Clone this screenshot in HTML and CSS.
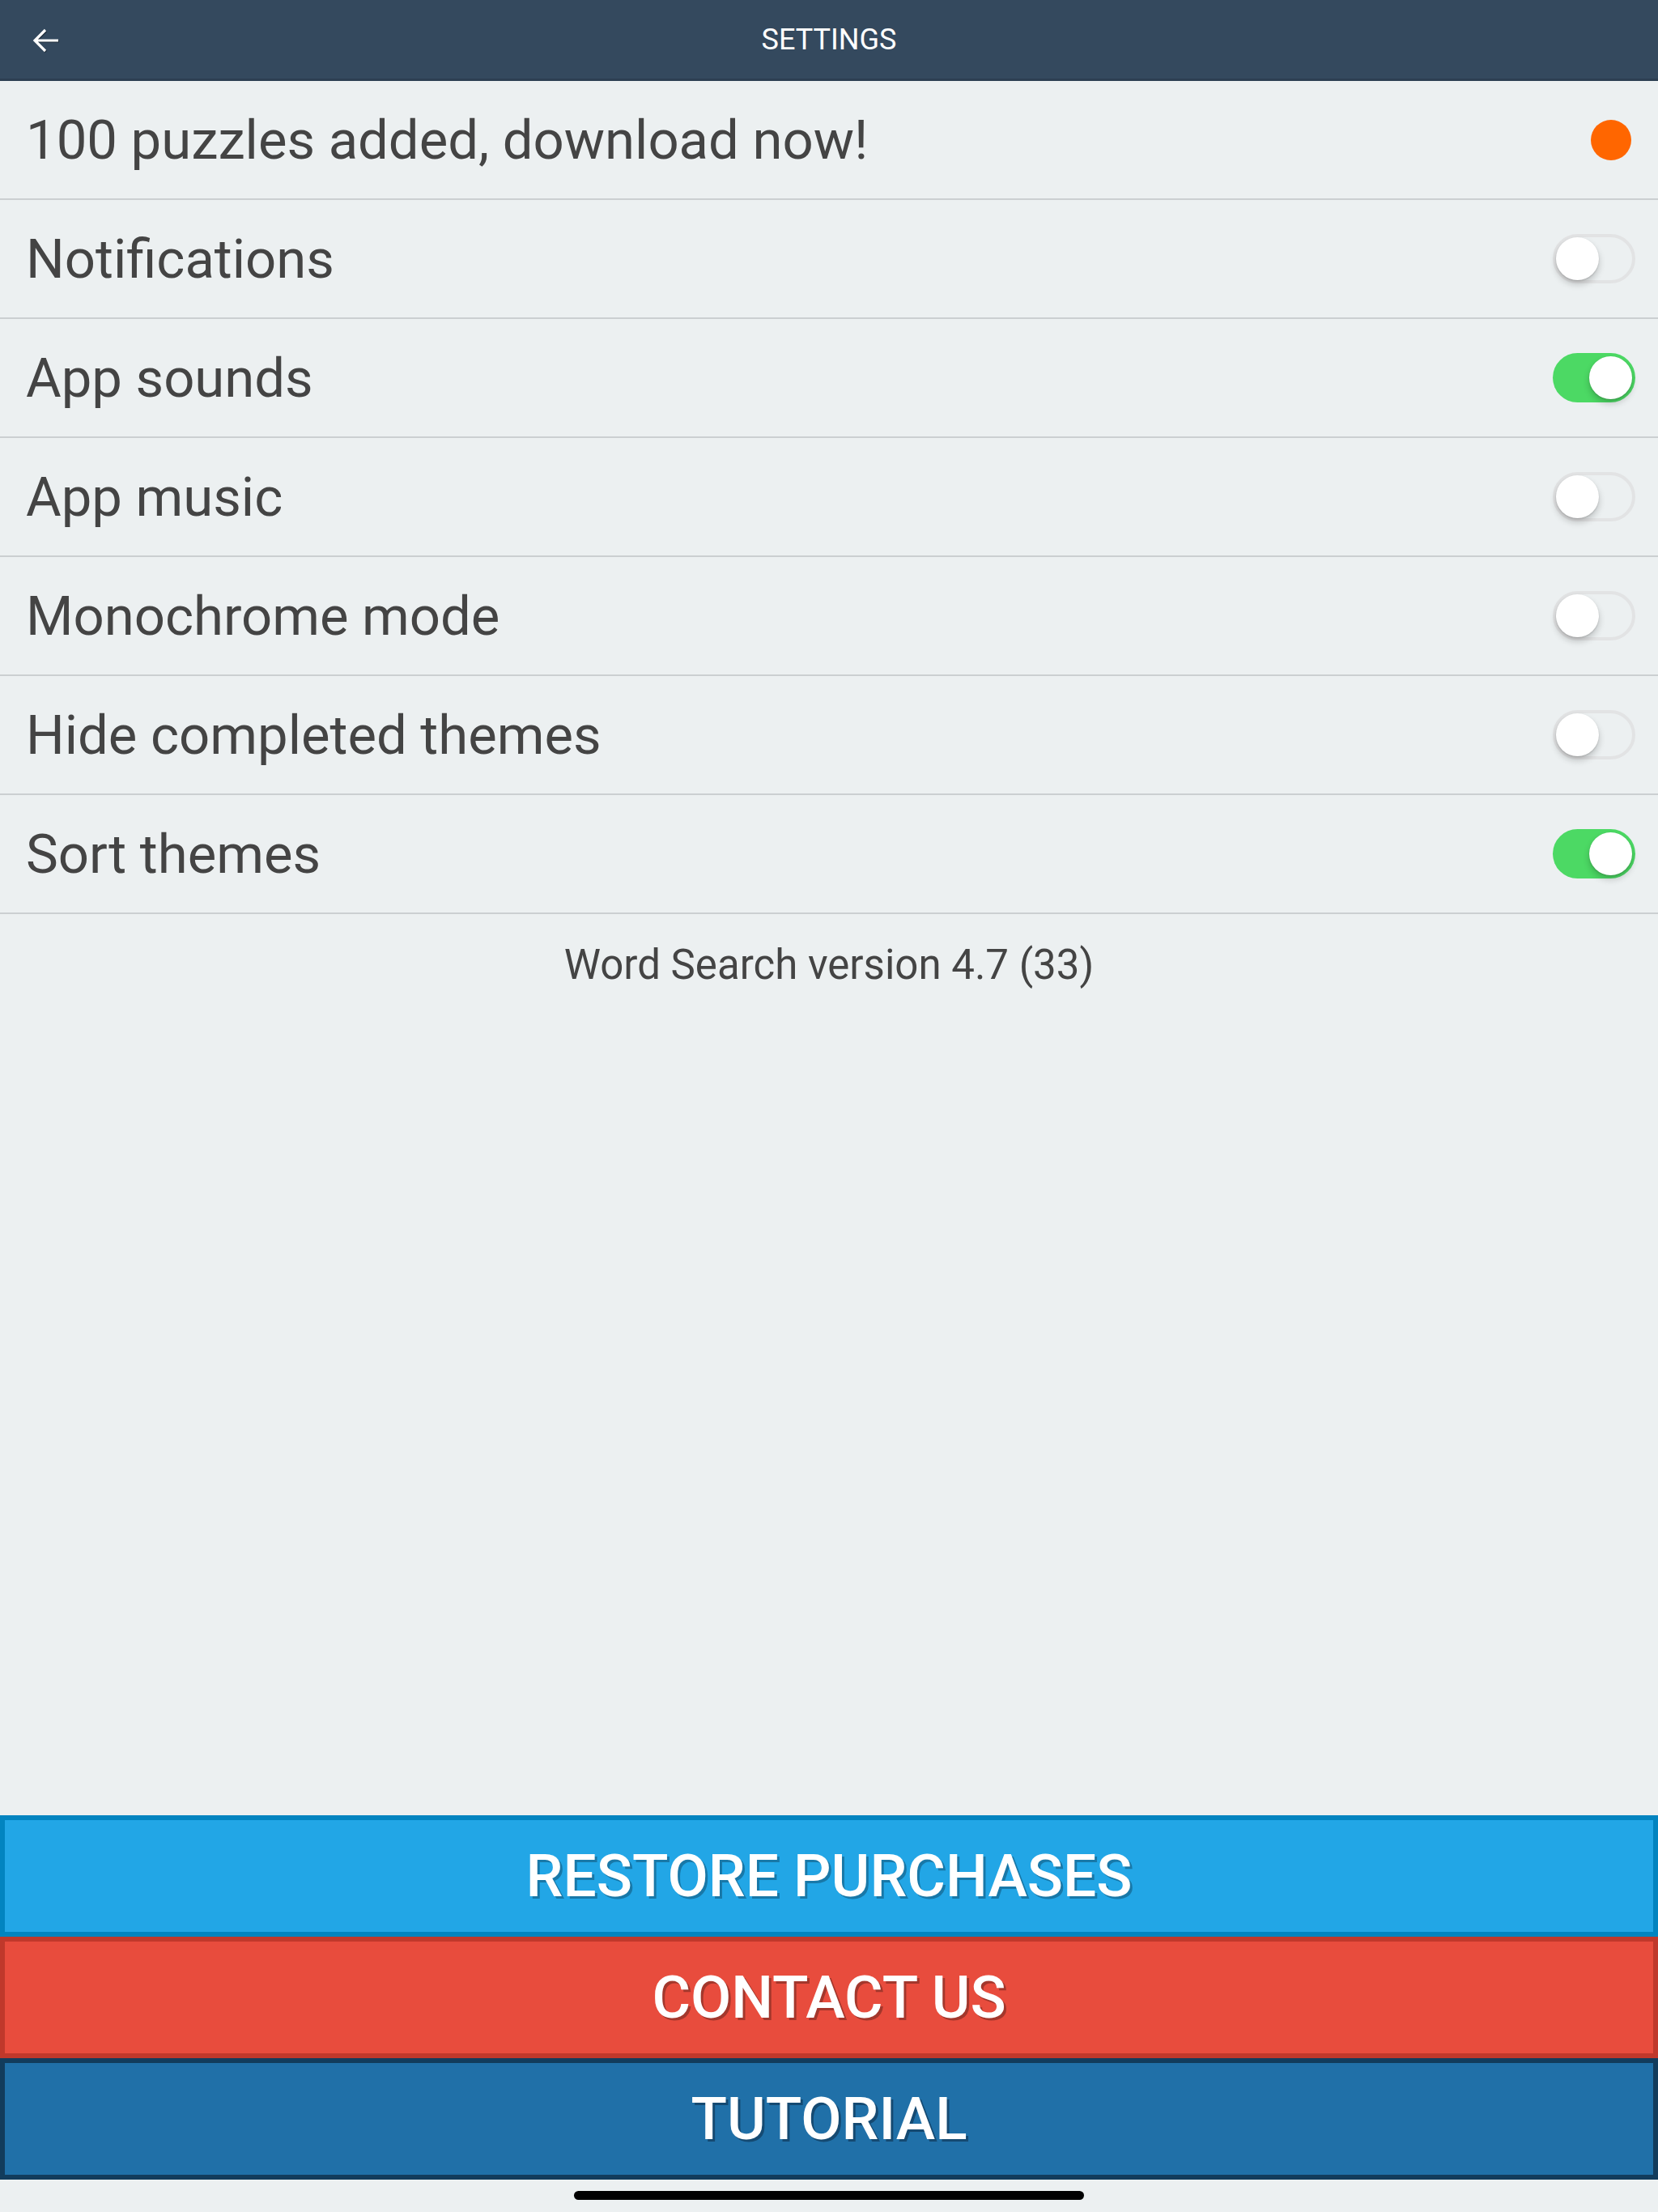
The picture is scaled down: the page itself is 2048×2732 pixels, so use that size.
FILE: index.html
```html
<!DOCTYPE html>
<html lang="en">

    <head>
        <meta charset="UTF-8">
        <meta name="viewport" content="width=device-width, initial-scale=1.0">
        <title>Settings</title>
        <link rel="stylesheet" href="styles.css">
    </head>

    <body>
        <div class="screen">
            <header class="topbar">
                <a class="back" href="#">
                    <svg width="34" height="32" viewBox="0 0 34 32">
                        <path d="M32 16H4M16 3L3 16l13 13" fill="none" stroke="#fff" stroke-width="3.2" />
                    </svg>
                </a>
                <span class="title">SETTINGS</span>
            </header>

            <ul class="settings">
                <li class="row">
                    <span>100 puzzles added, download now!</span>
                    <span class="dot"></span>
                </li>
                <li class="row">
                    <span>Notifications</span>
                    <span class="toggle"></span>
                </li>
                <li class="row">
                    <span>App sounds</span>
                    <span class="toggle on"></span>
                </li>
                <li class="row">
                    <span>App music</span>
                    <span class="toggle"></span>
                </li>
                <li class="row">
                    <span>Monochrome mode</span>
                    <span class="toggle"></span>
                </li>
                <li class="row">
                    <span>Hide completed themes</span>
                    <span class="toggle"></span>
                </li>
                <li class="row">
                    <span>Sort themes</span>
                    <span class="toggle on"></span>
                </li>
            </ul>

            <p class="version">Word Search version 4.7 (33)</p>

            <div class="actions">
                <button class="btn restore">RESTORE PURCHASES</button>
                <button class="btn contact">CONTACT US</button>
                <button class="btn tutorial">TUTORIAL</button>
            </div>

            <div class="home-bar"><span></span></div>
        </div>
    </body>

</html>
```

FILE: styles.css
```css
:root {
    --header-bg: #34495e;
    --page-bg: #ecf0f1;
    --text-color: #444444;
    --line-color: #cbcfd1;
    --green: #4cd964;
}

*,
*::before,
*::after {
    box-sizing: border-box;
}

body {
    margin: 0;
    font-family: Roboto, "Liberation Sans", sans-serif;
    background: var(--page-bg);
    color: var(--text-color);
}

.screen {
    display: flex;
    flex-direction: column;
    height: 2732px;
}

/* top bar */
.topbar {
    position: relative;
    height: 100px;
    background: var(--header-bg);
    display: flex;
    align-items: center;
    justify-content: center;
    box-shadow: inset 0 -13px 0 -10px #2d3f52;
}

.back {
    position: absolute;
    left: 40px;
    top: 34px;
    display: flex;
    filter: drop-shadow(1px 1px 0 rgba(0, 0, 0, 0.35));
}

.title {
    color: white;
    font-size: 36px;
    margin-bottom: 2px;
}

/* list of settings */
.settings {
    list-style: none;
    margin: 0;
    padding: 0;
}

.row {
    height: 147px;
    display: flex;
    align-items: center;
    justify-content: space-between;
    padding: 0 28px 0 32px;
    border-bottom: 2px solid var(--line-color);
    font-size: 67px;
}

.dot {
    width: 50px;
    height: 50px;
    margin-right: 5px;
    border-radius: 50%;
    background: #ff6600;
}

.toggle {
    position: relative;
    width: 102px;
    height: 61px;
    border-radius: 31px;
    border: 4px solid #e2e3e4;
    background: transparent;
}

.toggle::after {
    content: "";
    position: absolute;
    left: 0;
    top: 0;
    width: 53px;
    height: 53px;
    border-radius: 50%;
    background: white;
    box-shadow: 0 5px 8px rgba(0, 0, 0, 0.2), 0 1px 2px rgba(0, 0, 0, 0.15);
}

.toggle.on {
    border: none;
    background: var(--green);
}

.toggle.on::after {
    left: auto;
    right: 4px;
    top: 4px;
}

.version {
    margin: 33px 0 0;
    text-align: center;
    font-size: 51px;
}

/* bottom buttons */
.actions {
    margin-top: auto;
    display: flex;
    flex-direction: column;
}

.btn {
    height: 150px;
    border: 6px solid;
    color: white;
    font-family: Roboto, "Liberation Sans", sans-serif;
    font-size: 73px;
    font-weight: 500;
    cursor: pointer;
}

.restore {
    background: #22a6e6;
    border-color: #0284c0;
    text-shadow: 3px 3px 0 #1878a8;
}

.contact {
    background: #e84c3d;
    border-color: #c0382b;
    text-shadow: 3px 3px 0 #a3372c;
}

.tutorial {
    background: #2070a8;
    border-color: #123c5c;
    text-shadow: 3px 3px 0 #154a72;
}

.home-bar {
    height: 40px;
    display: flex;
    justify-content: center;
    padding-top: 14px;
}

.home-bar span {
    width: 630px;
    height: 11px;
    border-radius: 6px;
    background: black;
}
```
